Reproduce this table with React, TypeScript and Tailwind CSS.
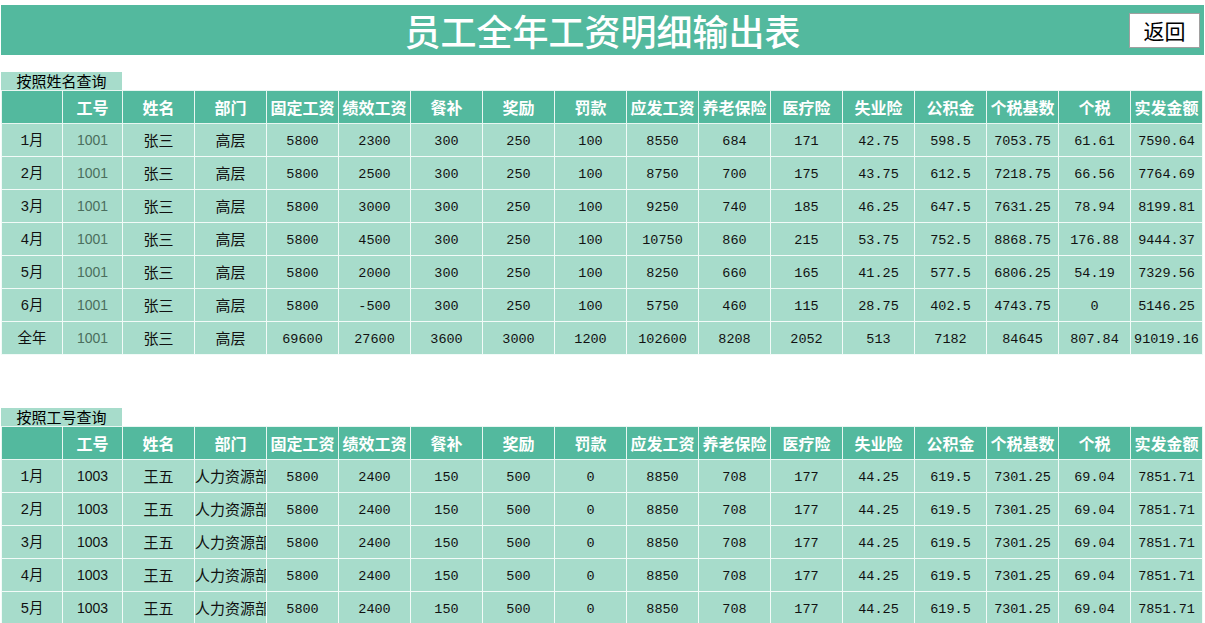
import React from "react";

const headers = ["", "工号", "姓名", "部门", "固定工资", "绩效工资", "餐补", "奖励", "罚款", "应发工资", "养老保险", "医疗险", "失业险", "公积金", "个税基数", "个税", "实发金额"];

const byName: string[][] = [
  ["1月", "1001", "张三", "高层", "5800", "2300", "300", "250", "100", "8550", "684", "171", "42.75", "598.5", "7053.75", "61.61", "7590.64"],
  ["2月", "1001", "张三", "高层", "5800", "2500", "300", "250", "100", "8750", "700", "175", "43.75", "612.5", "7218.75", "66.56", "7764.69"],
  ["3月", "1001", "张三", "高层", "5800", "3000", "300", "250", "100", "9250", "740", "185", "46.25", "647.5", "7631.25", "78.94", "8199.81"],
  ["4月", "1001", "张三", "高层", "5800", "4500", "300", "250", "100", "10750", "860", "215", "53.75", "752.5", "8868.75", "176.88", "9444.37"],
  ["5月", "1001", "张三", "高层", "5800", "2000", "300", "250", "100", "8250", "660", "165", "41.25", "577.5", "6806.25", "54.19", "7329.56"],
  ["6月", "1001", "张三", "高层", "5800", "-500", "300", "250", "100", "5750", "460", "115", "28.75", "402.5", "4743.75", "0", "5146.25"],
  ["全年", "1001", "张三", "高层", "69600", "27600", "3600", "3000", "1200", "102600", "8208", "2052", "513", "7182", "84645", "807.84", "91019.16"],
];

const wangwu = ["1003", "王五", "人力资源部", "5800", "2400", "150", "500", "0", "8850", "708", "177", "44.25", "619.5", "7301.25", "69.04", "7851.71"];
const byId: string[][] = ["1月", "2月", "3月", "4月", "5月"].map((m) => [m, ...wangwu]);

const widths = [61, 60, 72, 72, 72, 72, 72, 72, 72, 72, 72, 72, 72, 72, 72, 72, 72];

const cjk = { fontFamily: '"Noto Sans CJK SC", "Noto Sans", sans-serif' };
const mono = { fontFamily: '"Liberation Mono", "Noto Sans CJK SC", monospace' };
const arial = { fontFamily: '"Liberation Sans", Arial, sans-serif' };

function cellStyle(col: number) {
  if (col === 1) return arial;
  if (col === 2 || col === 3) return cjk;
  return mono;
}

function cellSize(col: number, idColor: string) {
  if (col === 0) return "text-[14.5px] text-[#111] pt-[2px]";
  if (col === 1) return `text-[14px] ${idColor}`;
  if (col === 2 || col === 3) return "text-[15px] text-[#111]";
  return "text-[13.5px] text-[#111] pt-[4px]";
}

function SalaryTable({ label, rows, idColor }: { label: string; rows: string[][]; idColor: string }) {
  return (
    <div>
      <div
        className="w-[121px] h-[18px] bg-[#a7dccb] text-[15px] leading-[18px] text-center text-black"
        style={cjk}
      >
        {label}
      </div>
      <table className="table-fixed border-collapse w-[1202px]">
        <colgroup>
          {widths.map((w, i) => (
            <col key={i} style={{ width: w }} />
          ))}
        </colgroup>
        <thead>
          <tr className="h-[33px] bg-[#53b99e]">
            {headers.map((h, i) => (
              <th
                key={i}
                className="border border-[#e8f6f1] p-0 text-white text-[16px] font-bold whitespace-nowrap overflow-hidden"
                style={cjk}
              >
                {h}
              </th>
            ))}
          </tr>
        </thead>
        <tbody>
          {rows.map((r, ri) => (
            <tr key={ri} className="h-[33px] bg-[#a7dccb]">
              {r.map((v, ci) => (
                <td key={ci} className="border border-[#f2fbf8] p-0">
                  <div
                    className={`w-full overflow-hidden whitespace-nowrap text-center leading-[20px] ${cellSize(ci, idColor)}`}
                    style={cellStyle(ci)}
                  >
                    {v}
                  </div>
                </td>
              ))}
            </tr>
          ))}
        </tbody>
      </table>
    </div>
  );
}

export default function App() {
  return (
    <div className="w-[1205px] h-[623px] overflow-hidden bg-white pt-[5px] pl-[1px]">
      <div className="w-[1203px] h-[50px] bg-[#53b99e] grid grid-cols-[1fr_auto_1fr] items-center">
        <div />
        <div className="text-white text-[36px] font-medium leading-none" style={cjk}>
          员工全年工资明细输出表
        </div>
        <div className="flex justify-end pr-[4px]">
          <button
            className="w-[71px] h-[35px] bg-white border border-[#a0a0a0] text-black text-[21px] leading-none"
            style={cjk}
          >
            返回
          </button>
        </div>
      </div>
      <div className="mt-[17px]">
        <SalaryTable label="按照姓名查询" rows={byName} idColor="text-[#4b6e5d]" />
      </div>
      <div className="mt-[53px]">
        <SalaryTable label="按照工号查询" rows={byId} idColor="text-[#111]" />
      </div>
    </div>
  );
}
